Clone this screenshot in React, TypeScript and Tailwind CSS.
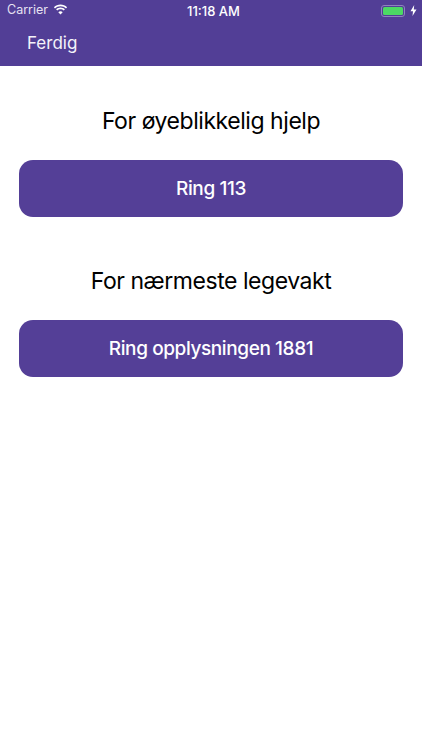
export default function App() {
  const font = { fontFamily: "Inter, 'Liberation Sans', sans-serif" };
  return (
    <div className="w-[422px] h-[750px] bg-white flex flex-col font-['Inter',sans-serif]" style={font}>
      <header className="h-[66px] bg-[#523e96] flex flex-col shrink-0">
        <div className="h-[21px] relative flex items-center justify-between pl-[7px] pr-[5px] text-white">
          <div className="flex items-center gap-[5px] text-[12.500px] text-[#e6e2f2]">
            <span>Carrier</span>
            <svg width="15" height="11" viewBox="0 0 15 11" fill="white" className="mb-[2px]">
              <path d="M7.5 2.2c2.1 0 4 .8 5.5 2.2l1.1-1.2C12.3 1.4 10 .4 7.5.4S2.700 1.400.9 3.200L2 4.400c1.500-1.400 3.400-2.200 5.500-2.200z" />
              <path d="M7.500 5.200c1.300 0 2.400.5 3.300 1.300l1.100-1.200c-1.200-1.100-2.700-1.800-4.400-1.800s-3.200.7-4.400 1.800l1.100 1.200c.9-.8 2-1.300 3.300-1.300z" />
              <path d="M7.500 10.600l2.200-2.400c-.6-.5-1.400-.9-2.200-.9s-1.600.4-2.200.9z" />
            </svg>
          </div>
          <span className="absolute left-[187px] top-[2px] text-[13px] font-medium leading-[18px]">11:18 AM</span>
          <div className="flex items-center gap-[3px]">
            <div className="w-[24px] h-[12px] rounded-[3px] border border-[#8f83bd] p-[1px]">
              <div className="w-full h-full rounded-[1.500px] bg-[#4cd964]" />
            </div>
            <svg width="7" height="11" viewBox="0 0 7 11" fill="white" className="ml-[2px]">
              <path d="M4.200 0L0.500 6.200H3L2.500 11L6.500 4.500H3.800z" />
            </svg>
          </div>
        </div>
        <div className="pl-[27px] text-[17px] leading-[22px] mt-[11px] text-[#f5f3fa]">Ferdig</div>
      </header>
      <main className="flex flex-col px-[19px]">
        <h2 className="text-center text-[23px] tracking-[-0.45px] leading-[28px] text-black mt-[41px]">For øyeblikkelig hjelp</h2>
        <button className="h-[57px] mt-[25px] pt-[2px] rounded-[14px] bg-[#543f97] text-white text-[19px] tracking-[-0.4px] font-medium">Ring 113</button>
        <h2 className="text-center text-[23px] tracking-[-0.45px] leading-[28px] text-black mt-[50px]">For nærmeste legevakt</h2>
        <button className="h-[57px] mt-[25px] pt-[2px] rounded-[14px] bg-[#543f97] text-white text-[19px] tracking-[-0.4px] font-medium">Ring opplysningen 1881</button>
      </main>
    </div>
  );
}
